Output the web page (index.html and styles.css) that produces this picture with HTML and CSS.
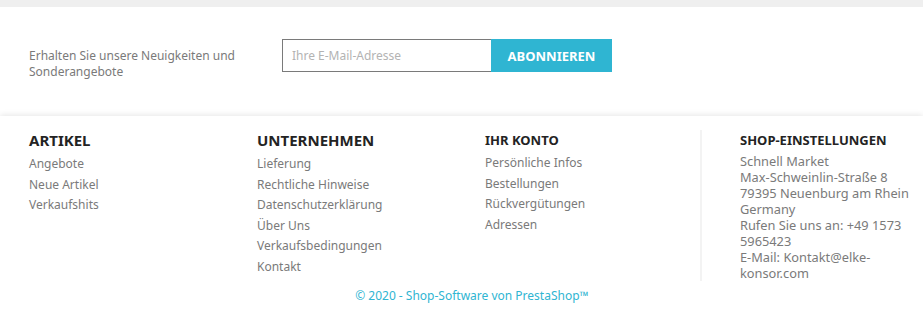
FILE: index.html
```html
<!DOCTYPE html>
<html lang="de">
<head>
  <meta charset="UTF-8" />
  <meta name="viewport" content="width=device-width, initial-scale=1.0"/>
  <title>Schnell Market</title>
  <link rel="stylesheet" href="styles.css">
</head>
<body>
  <div class="topbar"></div>

  <div class="newsletter">
    <p class="newsletter-text">Erhalten Sie unsere Neuigkeiten und Sonderangebote</p>
    <form class="newsletter-form">
      <input type="text" name="email" placeholder="Ihre E-Mail-Adresse">
      <button type="button">ABONNIEREN</button>
    </form>
  </div>

  <footer class="footer">
    <div class="columns">
      <div class="col">
        <h3 class="big">ARTIKEL</h3>
        <ul>
          <li><a href="#">Angebote</a></li>
          <li><a href="#">Neue Artikel</a></li>
          <li><a href="#">Verkaufshits</a></li>
        </ul>
      </div>
      <div class="col">
        <h3 class="big">UNTERNEHMEN</h3>
        <ul>
          <li><a href="#">Lieferung</a></li>
          <li><a href="#">Rechtliche Hinweise</a></li>
          <li><a href="#">Datenschutzerklärung</a></li>
          <li><a href="#">Über Uns</a></li>
          <li><a href="#">Verkaufsbedingungen</a></li>
          <li><a href="#">Kontakt</a></li>
        </ul>
      </div>
      <div class="col">
        <h3>IHR KONTO</h3>
        <ul>
          <li><a href="#">Persönliche Infos</a></li>
          <li><a href="#">Bestellungen</a></li>
          <li><a href="#">Rückvergütungen</a></li>
          <li><a href="#">Adressen</a></li>
        </ul>
      </div>
      <div class="col contact">
        <h3>SHOP-EINSTELLUNGEN</h3>
        <p>Schnell Market<br>Max-Schweinlin-Straße 8<br>79395 Neuenburg am Rhein<br>Germany<br>Rufen Sie uns an: +49 1573 5965423<br>E-Mail: Kontakt@elke-konsor.com</p>
      </div>
    </div>
    <p class="copyright"><a href="#">© 2020 - Shop-Software von PrestaShop™</a></p>
  </footer>
</body>
</html>
```

FILE: styles.css
```css
body {
  margin: 0;
  background: #fff;
  font-family: "Noto Sans", "Open Sans", sans-serif;
  color: #7a7a7a;
}

.topbar {
  height: 7px;
  background-color: #efefef;
}

/* newsletter */
.newsletter {
  height: 109px;
  box-sizing: border-box;
  padding: 32px 0 0 29px;
  display: flex;
  align-items: flex-start;
}

.newsletter-text {
  width: 243px;
  margin: 9px 10px 0 0;
  font-size: 12px;
  line-height: 16px;
}

.newsletter-form {
  display: flex;
}

.newsletter-form input {
  width: 209px;
  height: 33px;
  box-sizing: border-box;
  border: 1px solid #7a7a7a;
  border-right: none;
  padding: 0 9px;
  font-family: inherit;
  font-size: 12px;
  color: #7a7a7a;
  outline: none;
}

.newsletter-form input::placeholder {
  color: #b3b3b3;
}

.newsletter-form button {
  width: 121px;
  height: 33px;
  border: none;
  background-color: #2fb5d2;
  color: #fff;
  font-family: inherit;
  font-size: 13px;
  font-weight: bold;
  padding: 0;
}

/* footer */
.footer {
  position: relative;
  background: #fff;
  box-shadow: 0 -1px 6px rgba(0, 0, 0, 0.1);
  padding: 14px 8px 0 29px;
}

.columns {
  display: grid;
  grid-template-columns: 228px 228px 215px 1fr;
}

.col h3 {
  margin: 0 0 3px 0;
  font-size: 13px;
  line-height: 20px;
  font-weight: bold;
  color: #232323;
}

.col h3.big {
  font-size: 15px;
  margin-bottom: 4px;
}

.col ul {
  list-style: none;
  margin: 0;
  padding: 0;
}

.col li {
  font-size: 12px;
  line-height: 20.5px;
}

.col a {
  color: #7a7a7a;
  text-decoration: none;
}

.contact {
  border-left: 2px solid #f3f3f3;
  padding-left: 38px;
}

.contact h3 {
  margin-bottom: 2px;
}

.contact p {
  margin: 3px 0 0 0;
  font-size: 12.8px;
  line-height: 16px;
}

.copyright {
  margin: 5px 0 0 0;
  text-align: center;
  font-size: 12px;
  line-height: 20px;
}

.copyright a {
  color: #2fb5d2;
  text-decoration: none;
}
```
